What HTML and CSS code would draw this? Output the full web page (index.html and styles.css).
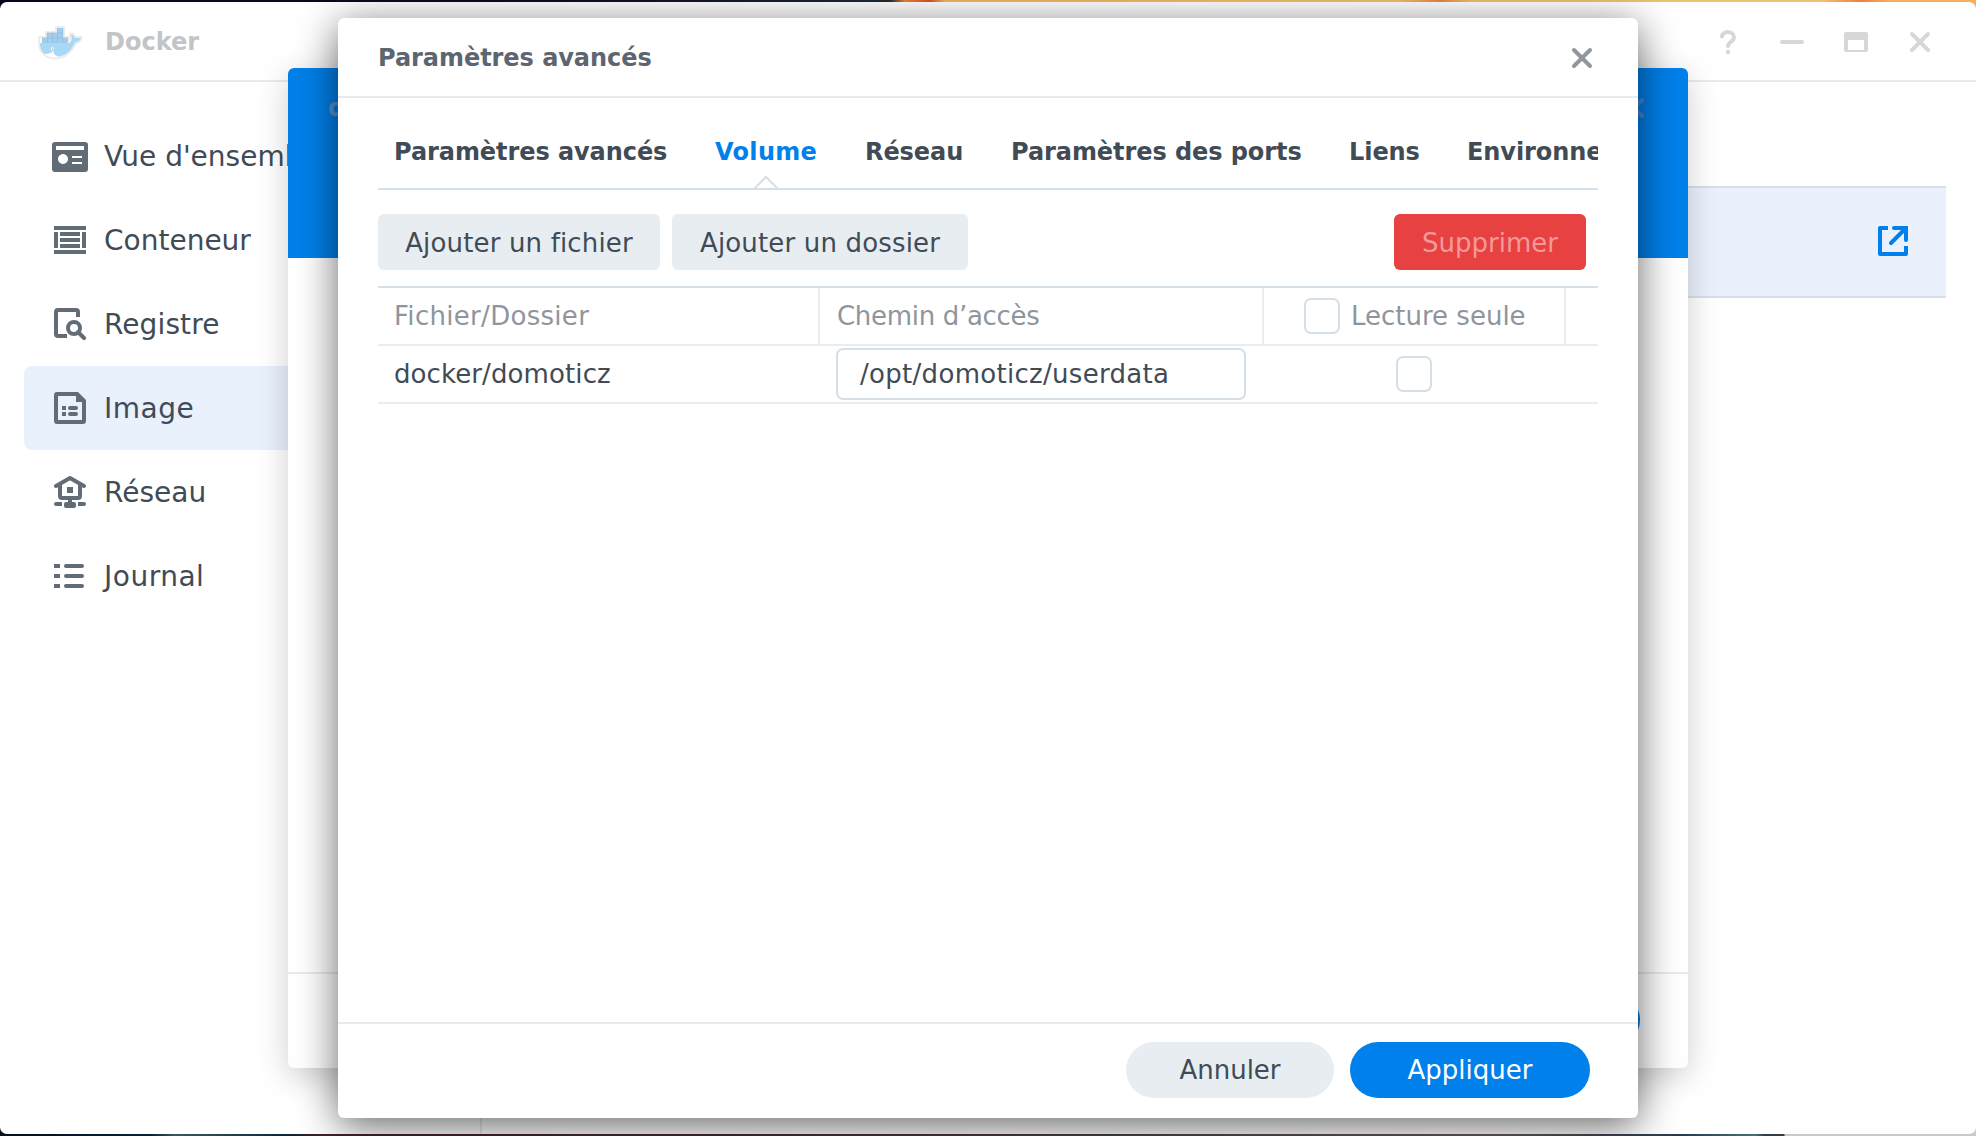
FILE: index.html
```html
<!DOCTYPE html>
<html lang="fr">
<head>
<meta charset="utf-8">
<title>Docker</title>
<link rel="stylesheet" href="styles.css">
</head>
<body>
<div class="desktop">
  <main class="window">
    <header class="window-bar">
      <svg class="whale" viewBox="0 0 44 34" width="44" height="34">
        <g fill="#fff" stroke="#ececec" stroke-width="2" stroke-linejoin="round">
          <path d="M1 17V11H8V6H18V1H26V11H31V15C33 14 32 10 32 8C34 6 36 8 37 11H43.500C43 15 40 17 38 17C33 27 26 32.500 17 32.500C6 32 1 25 1 17Z"/>
        </g>
        <path fill="#a3cdeb" d="M19 2h6v5h-6zM9 7h16v5H9zM4 12h26v6H4z"/>
        <path stroke="#8fbbdc" stroke-width=".6" d="M4 12h26M9 7h16M9.300 7v10M14.500 7v10M19.500 2v15M24.800 2v15" fill="none"/>
        <path fill="#a9d7f6" d="M2 17H30C34 16.500 34 13 33 9C35 8 36 10 37 12H43C42 15 39 16 37 16.500C33 26 26 31 17 31C7 31 1.500 25 2 17Z"/>
        <path fill="#fff" d="M6 28C11 28 13 27 15.500 25C15 28 18 30 21 30.500C15 32 10 31 6 28Z"/>
        <circle cx="14.500" cy="23" r="1.700" fill="#fff"/><circle cx="14.700" cy="23.200" r=".8" fill="#8fa9ba"/>
      </svg>
      <span class="window-title">Docker</span>
      <svg class="controls" viewBox="0 0 214 24" width="214" height="24" fill="none" stroke="#d6d7d9" stroke-width="4" stroke-linecap="round">
        <path d="M4 6.500C4.500 .5 16 .5 16 7.500C16 11.500 10 12 10 16"/><circle cx="10" cy="22" r="2.200" fill="#d6d7d9" stroke="none"/>
        <path d="M64 12H84"/>
        <path fill="#d6d7d9" stroke="none" fill-rule="evenodd" d="M128 2h20a2 2 0 0 1 2 2v16a2 2 0 0 1-2 2h-20a2 2 0 0 1-2-2V4a2 2 0 0 1 2-2zM130 10v10h16V10z"/>
        <path d="M194 4L210 20M210 4L194 20"/>
      </svg>
    </header>
    <div class="window-body">
      <nav class="sidebar">
        <a class="nav-item"><svg viewBox="0 0 36 32" width="36" height="32"><path fill="#626c77" fill-rule="evenodd" d="M3 2h30a3 3 0 0 1 3 3v24a3 3 0 0 1-3 3H3a3 3 0 0 1-3-3V5a3 3 0 0 1 3-3zM4 6v4h28V6zM20 16v2h10v-2zM20 22v2h10v-2zM11 14a5 5 0 1 0 .01 0z"/></svg><span>Vue d'ensemble</span></a>
        <a class="nav-item"><svg viewBox="0 0 36 32" width="36" height="32"><path fill="#626c77" d="M2 2h32v4H2zM2 8h4v16H2zM30 8h4v16h-4zM8 8h20v4H8zM8 14h20v4H8zM8 20h20v4H8zM2 26h32v4H2z"/></svg><span>Conteneur</span></a>
        <a class="nav-item"><svg viewBox="0 0 36 32" width="36" height="32" fill="none" stroke="#626c77" stroke-width="4"><path d="M26 9V4a2 2 0 0 0-2-2H6a2 2 0 0 0-2 2v22a2 2 0 0 0 2 2h9"/><circle cx="22" cy="20" r="6"/><path d="M26 24l6 6" stroke-linecap="round"/></svg><span class="ls1">Registre</span></a>
        <a class="nav-item active"><svg viewBox="0 0 36 32" width="36" height="32"><path fill="#626c77" fill-rule="evenodd" d="M5 0h21l8 8v21a3 3 0 0 1-3 3H5a3 3 0 0 1-3-3V3a3 3 0 0 1 3-3zM6 4v24h24V10h-6V4z"/><path fill="#626c77" d="M10 14h4v4h-4zM10 20h4v4h-4z"/><path stroke="#626c77" stroke-width="4" stroke-linecap="round" d="M18 16h6M18 22h6"/></svg><span class="ls5">Image</span></a>
        <a class="nav-item"><svg viewBox="0 0 36 32" width="36" height="32" fill="none" stroke="#626c77" stroke-width="4"><path stroke-linecap="round" stroke-linejoin="round" d="M4 10L18 2L32 10"/><path d="M8 9v11a2 2 0 0 0 2 2h16a2 2 0 0 0 2-2V9M18 22v6"/><path fill="#626c77" stroke="none" d="M15 11h6v6h-6zM14 26h8a2 2 0 0 1 2 2v2a2 2 0 0 1-2 2h-8a2 2 0 0 1-2-2v-2a2 2 0 0 1 2-2zM4 26h6v4H4a2 2 0 0 1 0-4zM26 26h6a2 2 0 0 1 0 4h-6z"/></svg><span>Réseau</span></a>
        <a class="nav-item"><svg viewBox="0 0 36 32" width="36" height="32"><path fill="#626c77" d="M2 4h6v4H2zM2 14h6v4H2zM2 24h6v4H2z"/><path stroke="#626c77" stroke-width="4" stroke-linecap="round" d="M14 6h16M14 16h16M14 26h16"/></svg><span class="ls5">Journal</span></a>
      </nav>
      <section class="content">
        <div class="image-row">
          <svg viewBox="0 0 30 30" width="30" height="30" fill="none" stroke="#0080ea" stroke-width="4"><path stroke-linejoin="round" d="M10 2H2V28H28V20"/><path stroke-linecap="round" d="M16 2H28V14M27 3L13 17"/><path d="M26 0h4v4h-4z" fill="#0080ea" stroke="none"/></svg>
        </div>
      </section>
    </div>
  </main>

  <section class="wizard">
    <header class="wizard-head"><span>domoticz</span>
      <svg viewBox="0 0 20 20" width="20" height="20" fill="none" stroke="#4889d3" stroke-width="4" stroke-linecap="round"><path d="M2 2L18 18M18 2L2 18"/></svg>
    </header>
    <footer class="wizard-foot"><span class="wizard-next"></span></footer>
  </section>

  <section class="dialog">
    <header class="dialog-head"><h1>Paramètres avancés</h1>
      <svg viewBox="0 0 22 22" width="22" height="22" fill="none" stroke="#92979f" stroke-width="4" stroke-linecap="round"><path d="M3 3L19 19M19 3L3 19"/></svg>
    </header>
    <div class="dialog-body">
      <div class="tabs">
        <span class="tab t1">Paramètres avancés</span>
        <span class="tab t2 current">Volume<svg class="notch" viewBox="0 0 26 15" width="26" height="15"><path fill="#fff" d="M1 15L13 2L25 15z"/><path fill="none" stroke="#d5dfe8" stroke-width="2" d="M0 14H1L13 2L25 14H26"/></svg></span>
        <span class="tab t3">Réseau</span>
        <span class="tab t4">Paramètres des ports</span>
        <span class="tab t5">Liens</span>
        <span class="tab t6">Environnement</span>
      </div>
      <div class="toolbar">
        <button class="btn add-file">Ajouter un fichier</button>
        <button class="btn add-folder">Ajouter un dossier</button>
        <button class="btn delete">Supprimer</button>
      </div>
      <div class="grid">
        <div class="row head">
          <div class="cell"><span class="ls3">Fichier/Dossier</span></div>
          <div class="cell path">Chemin d’accès</div>
          <div class="cell check"><i class="box"></i><span>Lecture seule</span></div>
          <div class="cell"></div>
        </div>
        <div class="row">
          <div class="cell"><span class="ls1">docker/domoticz</span></div>
          <div class="cell field"><div class="input"><span class="ls3">/opt/domoticz/userdata</span></div></div>
          <div class="cell check only"><i class="box"></i></div>
          <div class="cell"></div>
        </div>
      </div>
    </div>
    <footer class="dialog-foot">
      <button class="pill cancel">Annuler</button>
      <button class="pill apply">Appliquer</button>
    </footer>
  </section>
</div>
</body>
</html>
```
FILE: styles.css
```css
* { box-sizing: border-box; }
body {
  margin: 0;
  font-family: "DejaVu Sans", Verdana, sans-serif;
  font-size: 26px;
  color: #414b55;
}
svg { display: block; flex: none; }
.ls1 { letter-spacing: .1px; }
.ls3 { letter-spacing: .3px; }
.ls5 { letter-spacing: .5px; }
.desktop {
  position: relative;
  width: 1976px;
  height: 1136px;
  padding: 2px 0;
  overflow: hidden;
  background:
    linear-gradient(90deg, #06061c 0, #0b0d24 560px, #17202e 800px, #1e2b36 890px, #e8873a 905px, #d9502c 930px, #eeb562 945px, #efbd6b 1400px, #e98444 1440px, #efbd6b 1470px, #efc272 1700px, #f2c274 1820px, #ef7f45 1860px, #f5ae5c 1890px, #f5ae5c 1976px) 0 0 / 100% 8px no-repeat,
    linear-gradient(90deg, #031120 0, #04213a 150px, #3a5860 175px, #08273d 290px, #44222a 320px, #4a2a2c 700px, #4c4044 1100px, #6a5a5c 1500px, #263b50 1680px, #45707a 1755px, #333b44 1765px, #333b44 1784px, #c9c9c9 1785px, #c9c9c9 1976px) 0 100% / 100% 8px no-repeat;
}
.window {
  display: flex;
  flex-direction: column;
  height: 1132px;
  background: #fff;
  border-radius: 7px;
  overflow: hidden;
}
.window-bar {
  display: flex;
  align-items: center;
  height: 80px;
  padding: 1px 44px 0 38px;
  border-bottom: 2px solid #e6ebf0;
}
.whale { margin-top: 3px; }
.controls { margin-top: 1px; }
.window-title {
  flex: 1;
  margin: 1px 0 0 23px;
  font-weight: bold;
  font-size: 24px;
  color: #c2c5c8;
}
.window-body { display: flex; flex: 1; }
.sidebar {
  width: 482px;
  padding: 32px 24px 0;
  border-right: 2px solid #e6ebf0;
}
.nav-item {
  display: flex;
  align-items: center;
  gap: 16px;
  height: 84px;
  padding-left: 28px;
  border-radius: 8px;
  font-size: 28px;
  white-space: nowrap;
}
.nav-item.active { background: #e9f1fd; }
.content { flex: 1; padding: 104px 30px 0 24px; }
.image-row {
  display: flex;
  align-items: center;
  justify-content: flex-end;
  height: 112px;
  padding: 0 38px 2px 0;
  background: #eaf1fc;
  border: solid #d6dfea;
  border-width: 2px 0;
}
.wizard, .dialog {
  position: absolute;
  display: flex;
  flex-direction: column;
  background: #fff;
  border-radius: 6px;
}
.wizard {
  left: 288px;
  top: 68px;
  width: 1400px;
  height: 1000px;
  justify-content: space-between;
  box-shadow: 0 8px 32px rgba(0, 0, 0, .2);
}
.wizard-head {
  display: flex;
  justify-content: space-between;
  align-items: flex-start;
  height: 190px;
  padding: 26px 44px 0 40px;
  border-radius: 6px 6px 0 0;
  background: #0080ea;
  color: #5a92d2;
  font-size: 24px;
  font-weight: bold;
}
.wizard-head svg { margin-top: 4px; }
.wizard-foot {
  display: flex;
  justify-content: flex-end;
  height: 96px;
  padding: 18px 48px 0;
  border-top: 2px solid #e6ebf0;
}
.wizard-next { width: 200px; height: 56px; border-radius: 28px; background: #0080ea; }
.dialog {
  left: 338px;
  top: 18px;
  width: 1300px;
  height: 1100px;
  box-shadow: 0 8px 40px rgba(0, 0, 0, .6);
}
.dialog-head {
  display: flex;
  align-items: center;
  justify-content: space-between;
  height: 80px;
  padding: 0 45px 0 40px;
  border-bottom: 2px solid #e6ebf0;
}
.dialog-head h1 { margin: 2px 0 0; font-size: 24px; color: #5c6570; letter-spacing: -.05px; }
.dialog-head svg { margin-top: 2px; }
.dialog-body { flex: 1; padding: 0 40px; }
.tabs {
  display: flex;
  height: 92px;
  padding-left: 16px;
  border-bottom: 2px solid #d5dfe8;
  overflow: hidden;
  white-space: nowrap;
  font-weight: bold;
  font-size: 24px;
}
.tab { position: relative; flex: none; height: 92px; line-height: 109px; letter-spacing: -.07px; }
.t1 { width: 321px; }
.t2 { width: 150px; letter-spacing: .3px; }
.t3 { width: 146px; }
.t4 { width: 338px; }
.t5 { width: 118px; }
.current { color: #0080ea; }
.notch { position: absolute; left: 38px; top: 77px; }
.toolbar { display: flex; gap: 12px; padding: 24px 12px 16px 0; }
.btn, .pill {
  height: 56px;
  padding: 1px 0 0;
  border: 0;
  border-radius: 6px;
  background: #e8edf2;
  color: #414b55;
  font: inherit;
}
.pill { padding: 0; }
.add-file, .add-folder { letter-spacing: .16px; }
.add-file { width: 282px; }
.add-folder { width: 296px; }
.delete { width: 192px; margin-left: auto; background: #e84142; color: #f29a99; }
.grid { border-top: 2px solid #d5dfe8; }
.row {
  display: grid;
  grid-template-columns: 442px 444px 302px 1fr;
  height: 58px;
  border-bottom: 2px solid #e8edf2;
}
.cell { display: flex; align-items: center; padding-left: 16px; white-space: nowrap; }
.head { color: #8f959c; }
.head .cell:not(:last-child) { border-right: 2px solid #e8edf2; }
.path { padding-left: 17px; letter-spacing: -.3px; }
.check { padding-left: 40px; gap: 11px; }
.check.only { justify-content: center; padding: 0 2px 0 0; }
.box { flex: none; width: 36px; height: 36px; border: 2px solid #d5dfe8; border-radius: 7px; }
.input {
  width: 410px;
  height: 52px;
  padding-left: 22px;
  border: 2px solid #d5dfe8;
  border-radius: 7px;
  line-height: 48px;
}
.dialog-foot {
  display: flex;
  justify-content: flex-end;
  gap: 16px;
  height: 96px;
  padding: 18px 48px 0;
  border-top: 2px solid #e6ebf0;
}
.pill { border-radius: 28px; }
.cancel { width: 208px; }
.apply { width: 240px; background: #0080ea; color: #fff; }
```
